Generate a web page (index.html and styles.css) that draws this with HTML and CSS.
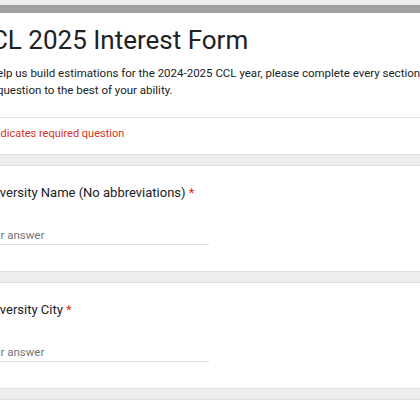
FILE: index.html
```html
<!DOCTYPE html>
<html lang="en">
<head>
  <meta charset="UTF-8">
  <title>CCL 2025 Interest Form</title>
  <link rel="stylesheet" href="styles.css">
</head>
<body>
  <div class="form">
    <div class="card header">
      <h1 class="title">CCL 2025 Interest Form</h1>
      <p class="desc">To help us build estimations for the 2024-2025 CCL year, please complete every section and question to the best of your ability.</p>
      <div class="divider"></div>
      <p class="required">* Indicates required question</p>
    </div>

    <div class="card question">
      <div class="q-title">University Name (No abbreviations) <span class="star">*</span></div>
      <div class="answer">Your answer</div>
    </div>

    <div class="card question">
      <div class="q-title">University City <span class="star">*</span></div>
      <div class="answer">Your answer</div>
    </div>

    <div class="card question"></div>
  </div>
</body>
</html>
```

FILE: styles.css
```css
html, body {
  overflow: hidden;
}

body {
  margin: 0;
  background: #eeeeee;
  font-family: Roboto, "Liberation Sans", sans-serif;
  color: #202124;
}

.form {
  width: 720px;
  margin-left: -42px;
  padding-top: 5px;
  display: flex;
  flex-direction: column;
  gap: 10px;
}

.card {
  background: #fff;
  border: 1px solid #e0e0e0;
  border-radius: 8px;
  padding: 0 20px 0 22px;
}

.header {
  border-top: 8px solid #a0a0a0;
  padding: 0;
}

.title {
  margin: 11px 20px 0 15px;
  font-size: 26px;
  line-height: 32px;
  font-weight: 400;
}

.desc {
  margin: 9px 20px 0 16px;
  font-size: 11.5px;
  line-height: 17px;
  width: 450px;
}

.divider {
  margin-top: 18px;
  border-top: 1px solid #e0e0e0;
}

.required {
  margin: 7px 20px 12px 25px;
  font-size: 11px;
  line-height: 17px;
  color: #d93025;
}

.question {
  padding-top: 17px;
  padding-bottom: 26px;
}

.q-title {
  font-size: 13px;
  line-height: 20px;
}

.star {
  color: #d93025;
}

.answer {
  margin-top: 24px;
  width: 228px;
  font-size: 11.5px;
  line-height: 17px;
  color: #70757a;
  border-bottom: 1px solid #e0e0e0;
}
```
